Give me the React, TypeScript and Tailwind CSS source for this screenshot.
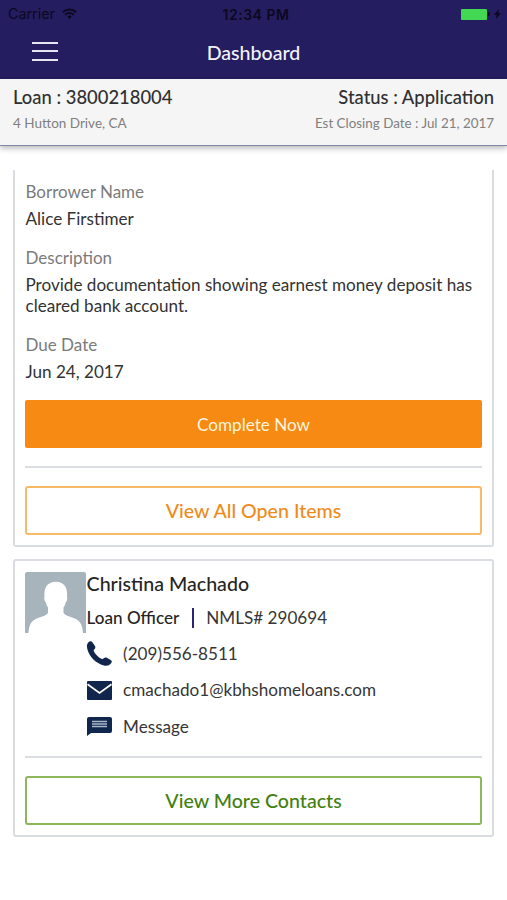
import type { ReactNode } from 'react';

interface FieldProps {
  label: string;
  children: ReactNode;
}

function Field({ label, children }: FieldProps) {
  return (
    <div>
      <div className="h-[27px] text-[17px] leading-[20px] text-[#7b7b7b]">{label}</div>
      <div className="text-[17.1px] leading-[20.5px] text-[#333333]">{children}</div>
    </div>
  );
}

interface ContactRowProps {
  icon: ReactNode;
  children: ReactNode;
}

function ContactRow({ icon, children }: ContactRowProps) {
  return (
    <a className="flex h-[36.5px] items-center text-[17.1px] text-[#363636]">
      <span className="w-[36.5px] shrink-0">{icon}</span>
      {children}
    </a>
  );
}

function StatusBar() {
  return (
    <div className="grid h-7 grid-cols-3 items-center pr-1.5 pl-2 font-['Inter','Liberation_Sans',sans-serif] text-[14.3px] text-[#0b0820]">
      <div className="flex items-center gap-[7px]">
        <span>Carrier</span>
        <svg className="h-3 w-[15px]" viewBox="0 0 15 12" fill="none" stroke="currentColor" strokeWidth="1.9">
          <path d="M.9 4.2a9.5 9.5 0 0 1 13.2 0M3.2 6.7a6.2 6.2 0 0 1 8.6 0" />
          <path d="M5.2 8.6a3.3 3.3 0 0 1 4.6 0L7.5 11z" fill="currentColor" stroke="none" />
        </svg>
      </div>
      <span className="pl-[3px] text-center text-[14px] font-semibold tracking-[0.5px] whitespace-nowrap">12:34 PM</span>
      <div className="flex items-center justify-end">
        <span className="h-[11px] w-[26px] rounded-[1px] bg-[#43d854]" />
        <span className="ml-px h-1 w-0.5 rounded-r-full bg-current" />
        <svg className="ml-1 h-2.5 w-[7px]" viewBox="0 0 7 10" fill="currentColor">
          <path d="M5 0 0 5.700h2.600L1.600 10 7 4.200H4.200z" />
        </svg>
      </div>
    </div>
  );
}

function Avatar() {
  return (
    <svg className="h-[61px] w-[61px] shrink-0 rounded-t-[2px]" viewBox="0 0 61 61">
      <path fill="#a8b4bb" d="M0 0h61v61H0z" />
      <path
        fill="#fff"
        d="M3.500 61C4 53 6 48.500 13 46c5-1.800 8.500-2.800 10-5v-5.500c-1.200-1.500-1.700-3-2-5-1.200-.5-2.200-4-1.500-5.500C18.600 15 23 9.800 30.800 9.800S43 15 42 25c.7 1.500-.3 5-1.500 5.500-.3 2-.8 3.500-2 5V41c1.500 2.200 5 3.200 10 5 7 2.500 9 7 9.500 15z"
      />
    </svg>
  );
}

function PhoneIcon() {
  return (
    <svg className="h-[25px] w-[25px]" viewBox="0 0 25 25" fill="#10264d">
      <path d="M1 1.800C2.600.1 4.500-.1 5.400 1.200l2.500 3.900c.8 1.300.5 2.400-.5 3.200-.9.7-1 1.300-.3 2.500 1.800 3 4.200 5.400 7.200 7 1.100.6 1.800.3 2.500-.5.8-.9 1.900-1.100 3-.5l3.900 2.200c1.300.7 1.500 1.900.4 3.200-1.700 2.300-4.400 3-7.200 2.200C8.800 22.100 2.600 15.900.3 7.900-.3 5.500-.2 3.300 1 1.800z" />
    </svg>
  );
}

function MailIcon() {
  return (
    <svg className="h-[19px] w-[25px]" viewBox="0 0 25 19">
      <rect width="25" height="19" rx="1" fill="#10264d" />
      <path d="M.5 3.200 12.500 12l12-8.800" fill="none" stroke="#fff" strokeWidth="1.700" />
    </svg>
  );
}

function MessageIcon() {
  return (
    <svg className="h-[19px] w-[25px]" viewBox="0 0 25 19">
      <path d="M2 0h21a2 2 0 0 1 2 2v12a2 2 0 0 1-2 2H4L0 19V2a2 2 0 0 1 2-2z" fill="#10264d" />
      <path d="M5 4.500h15M5 7h15M5 9.500h15" stroke="#a9b8ca" strokeWidth="1.700" />
    </svg>
  );
}

export default function App() {
  return (
    <div className="flex h-[900px] w-[507px] flex-col overflow-hidden bg-white font-['Lato',sans-serif]">
      <header className="h-[79px] shrink-0 bg-[#241d60]">
        <StatusBar />
        <div className="grid h-[50px] grid-cols-3 items-center">
          <button className="ml-8 flex w-[26px] flex-col gap-[6.500px] pb-1" aria-label="Menu">
            <span className="h-0.5 w-full bg-[#e6e5f1]" />
            <span className="h-0.5 w-full bg-[#e6e5f1]" />
            <span className="h-0.5 w-full bg-[#e6e5f1]" />
          </button>
          <h1 className="pb-px text-center text-[19.6px] font-medium text-[#f3f2fa]">Dashboard</h1>
        </div>
      </header>

      {/* Loan summary */}
      <section className="z-10 flex h-[67px] shrink-0 justify-between border-b border-[#8486a5] bg-[#f5f5f5] px-[13px] pt-1.5 shadow-[0_2px_6px_rgba(0,0,0,0.3)]">
        <div>
          <div className="text-[18.4px] leading-6 font-medium text-[#303030]">Loan : 3800218004</div>
          <div className="mt-1 text-[13.5px] leading-5 text-[#808080]">4 Hutton Drive, CA</div>
        </div>
        <div className="text-right">
          <div className="text-[18.4px] leading-6 font-medium text-[#303030]">Status : Application</div>
          <div className="mt-1 text-[13.4px] leading-5 text-[#808080]">Est Closing Date : Jul 21, 2017</div>
        </div>
      </section>

      <main className="px-[13px] pt-6">
        {/* Open item, scrolled under the summary */}
        <section className="h-[377px] rounded-b-[3px] border-2 border-t-0 border-[#d9dce0] px-[10px] pt-3">
          <div className="flex h-[218px] flex-col gap-[18.500px] pl-[0.5px]">
            <Field label="Borrower Name">Alice Firstimer</Field>
            <Field label="Description">
              Provide documentation showing earnest money deposit has cleared bank account.
            </Field>
            <Field label="Due Date">Jun 24, 2017</Field>
          </div>
          <button className="block h-[48px] w-full rounded-[2px] bg-[#f68a12] pt-px text-[17.1px] text-[#fff4dc]">
            Complete Now
          </button>
          <hr className="mt-[18px] border-t-2 border-[#d9dce0]" />
          <button className="mt-[18px] block h-[49px] w-full rounded-[3px] border-2 border-[#f7ba68] text-[19.6px] font-medium text-[#ee8b1c]">
            View All Open Items
          </button>
        </section>

        {/* Loan officer */}
        <section className="mt-3 h-[278px] rounded-[3px] border-2 border-[#d9dce0] px-[10px] pt-[11px]">
          <div className="flex h-[184px] items-start">
            <Avatar />
            <div className="pl-[0.6px]">
              <h2 className="text-[19.6px] leading-[23px] font-medium text-[#252525]">Christina Machado</h2>
              <div className="mt-[11px] mb-[5.500px] flex h-6 items-center text-[17.1px] text-[#363636]">
                <span className="font-medium text-[#252525]">Loan Officer</span>
                <span className="mr-3 ml-[12.500px] h-5 w-[2.500px] bg-[#2b2473]" />
                <span>NMLS# 290694</span>
              </div>
              <ContactRow icon={<PhoneIcon />}>(209)556-8511</ContactRow>
              <ContactRow icon={<MailIcon />}>cmachado1@kbhshomeloans.com</ContactRow>
              <ContactRow icon={<MessageIcon />}>Message</ContactRow>
            </div>
          </div>
          <hr className="border-t-2 border-[#d9dce0]" />
          <button className="mt-[18px] block h-[49px] w-full rounded-[3px] border-2 border-[#8db65d] text-[19.6px] font-medium text-[#43800f]">
            View More Contacts
          </button>
        </section>
      </main>
    </div>
  );
}
